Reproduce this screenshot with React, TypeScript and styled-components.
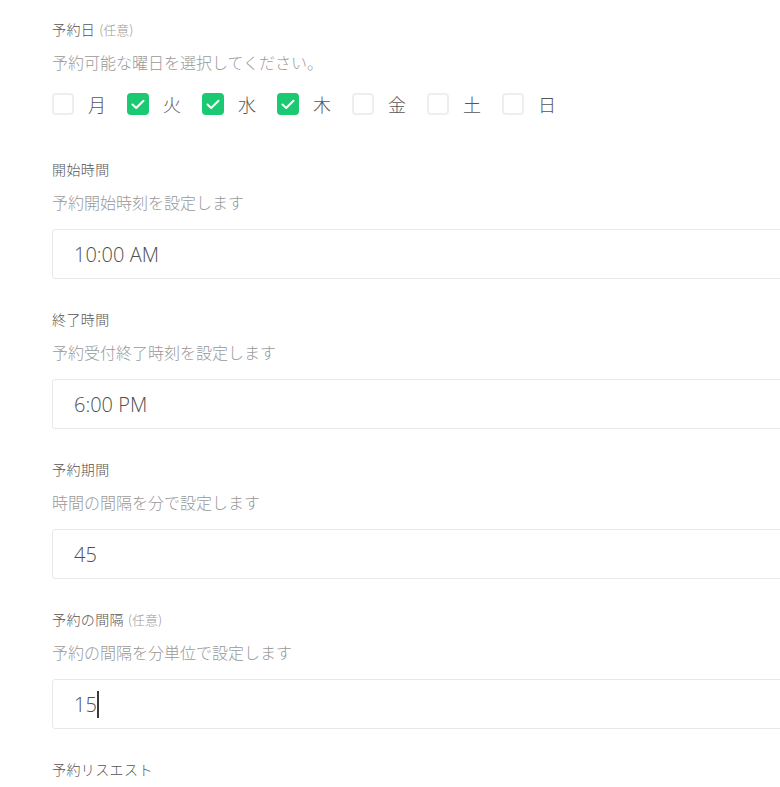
import React from "react";
import styled, { createGlobalStyle } from "styled-components";

const Global = createGlobalStyle`
  html, body { margin: 0; padding: 0; background: #fff; overflow: hidden; }
  body { font-family: "Noto Sans CJK JP", "Open Sans", sans-serif; }
`;

const Page = styled.div`
  padding: 19px 0 0 52px;
  width: 800px;
`;

const Section = styled.div<{ $gap?: number }>`
  display: flex;
  flex-direction: column;
  margin-bottom: ${(p) => p.$gap ?? 30}px;
`;

const Label = styled.div`
  font-size: 14px;
  font-weight: 300;
  letter-spacing: 0.4px;
  line-height: 20px;
  height: 20px;
  color: #555;
  white-space: nowrap;
`;

const Optional = styled.span`
  color: #999;
  font-size: 13px;
  margin-left: 4px;
  letter-spacing: 0;
`;

const Desc = styled.div`
  margin-top: 13px;
  font-size: 16px;
  font-weight: 300;
  line-height: 20px;
  height: 20px;
  color: #999;
  white-space: nowrap;
`;

const Days = styled.div`
  display: flex;
  margin-top: 21px;
  height: 22px;
  align-items: center;
`;

const Day = styled.label`
  display: flex;
  align-items: center;
  width: 75px;
`;

const Box = styled.span<{ $on: boolean }>`
  box-sizing: border-box;
  width: 22px;
  height: 22px;
  border-radius: 4px;
  border: ${(p) => (p.$on ? "none" : "2px solid #eceef2")};
  background: ${(p) => (p.$on ? "#1bc973" : "#fff")};
  display: flex;
  align-items: center;
  justify-content: center;
`;

const DayText = styled.span`
  margin-left: 14px;
  font-size: 18px;
  font-weight: 300;
  color: #555;
  line-height: 22px;
  height: 22px;
`;

const Input = styled.div`
  box-sizing: border-box;
  margin-top: 17px;
  width: 760px;
  height: 50px;
  border: 1px solid #e8e8e8;
  border-radius: 3px;
  padding-left: 21px;
  display: flex;
  align-items: center;
  font-family: "Open Sans", "Liberation Sans", sans-serif;
  font-weight: 300;
  font-size: 20px;
  color: #4f4f4f;
`;

const Caret = styled.span`
  display: inline-block;
  width: 2px;
  height: 27px;
  background: #3a3a3a;
`;

const Check = () => (
  <svg width="14" height="11" viewBox="0 0 14 11">
    <path d="M1.5 5.5 L5.2 9 L12.5 1.8" fill="none" stroke="#fff" strokeWidth="2" strokeLinecap="round" strokeLinejoin="round" />
  </svg>
);

const days: [string, boolean][] = [
  ["月", false],
  ["火", true],
  ["水", true],
  ["木", true],
  ["金", false],
  ["土", false],
  ["日", false],
];

const fields = [
  { label: "開始時間", desc: "予約開始時刻を設定します", value: "10:00 AM" },
  { label: "終了時間", desc: "予約受付終了時刻を設定します", value: "6:00 PM" },
  { label: "予約期間", desc: "時間の間隔を分で設定します", value: "45" },
  { label: "予約の間隔", opt: true, desc: "予約の間隔を分単位で設定します", value: "15", caret: true },
];

export default function App() {
  return (
    <>
      <Global />
      <Page>
        <Section $gap={44}>
          <Label>
            予約日<Optional>(任意)</Optional>
          </Label>
          <Desc>予約可能な曜日を選択してください。</Desc>
          <Days>
            {days.map(([d, on]) => (
              <Day key={d}>
                <Box $on={on}>{on && <Check />}</Box>
                <DayText>{d}</DayText>
              </Day>
            ))}
          </Days>
        </Section>
        {fields.map((f) => (
          <Section key={f.label}>
            <Label>
              {f.label}
              {f.opt && <Optional>(任意)</Optional>}
            </Label>
            <Desc>{f.desc}</Desc>
            <Input>
              {f.value}
              {f.caret && <Caret />}
            </Input>
          </Section>
        ))}
        <Section>
          <Label>予約リスエスト</Label>
        </Section>
      </Page>
    </>
  );
}
